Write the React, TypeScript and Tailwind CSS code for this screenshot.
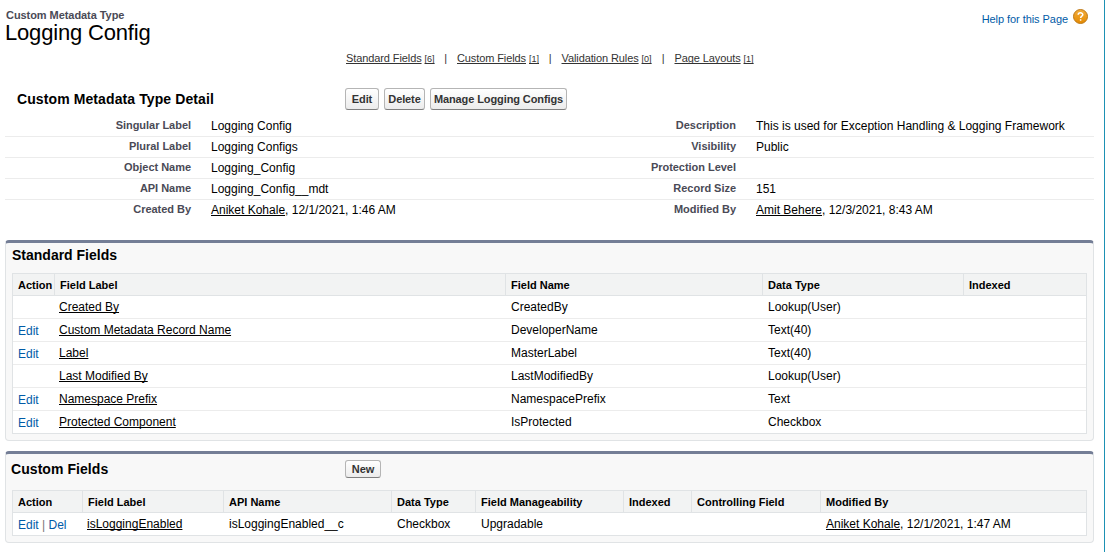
import React from "react";

const links = [
  { label: "Standard Fields", count: "[6]", w: "w-[111px]" },
  { label: "Custom Fields", count: "[1]", w: "w-[104.5px]" },
  { label: "Validation Rules", count: "[0]", w: "w-[113px]" },
  { label: "Page Layouts", count: "[1]", w: "w-[81px]" },
];

type Detail = [string, React.ReactNode, string, React.ReactNode];

const U = ({ children }: { children: React.ReactNode }) => (
  <a href="#" className="underline underline-offset-[1px] decoration-1 [text-decoration-skip-ink:none]">{children}</a>
);

const details: Detail[] = [
  ["Singular Label", "Logging Config", "Description", "This is used for Exception Handling & Logging Framework"],
  ["Plural Label", "Logging Configs", "Visibility", "Public"],
  ["Object Name", "Logging_Config", "Protection Level", ""],
  ["API Name", "Logging_Config__mdt", "Record Size", "151"],
  ["Created By", <><U>Aniket Kohale</U>, 12/1/2021, 1:46 AM</>, "Modified By", <><U>Amit Behere</U>, 12/3/2021, 8:43 AM</>],
];

const standard = [
  [false, "Created By", "CreatedBy", "Lookup(User)"],
  [true, "Custom Metadata Record Name", "DeveloperName", "Text(40)"],
  [true, "Label", "MasterLabel", "Text(40)"],
  [false, "Last Modified By", "LastModifiedBy", "Lookup(User)"],
  [true, "Namespace Prefix", "NamespacePrefix", "Text"],
  [true, "Protected Component", "IsProtected", "Checkbox"],
] as const;

function Button({ children, className }: { children: React.ReactNode; className: string }) {
  return (
    <button
      className={`flex shrink-0 items-center justify-center whitespace-nowrap rounded-[3px] border border-[#b5b5b5] border-b-[#7f7f7f] bg-linear-to-b from-white to-[#ececec] text-[11px] leading-none font-bold tracking-[-0.1px] text-[#333] ${className}`}
    >
      {children}
    </button>
  );
}

function Panel({ title, titleClass, button, className, children }: { title: string; titleClass: string; button?: React.ReactNode; className: string; children: React.ReactNode }) {
  return (
    <section className={`flex w-[1089px] flex-col rounded-[4px] border border-t-[3px] border-[#e0e3e5] border-t-[#747e96] bg-[#f8f8f8] px-[6px] ${className}`}>
      <div className="flex h-[30px] items-start">
        <h2 className={`w-[333px] text-[14px] leading-[18px] font-bold ${titleClass}`}>{title}</h2>
        {button}
      </div>
      {children}
    </section>
  );
}

const headCell = "border-l border-[#e0e3e5] pl-[5px] first:border-l-0";
const stdCols = "grid grid-cols-[41px_451px_257px_201px_1fr]";
const cusCols = "grid grid-cols-[69px_141px_168px_84px_148px_68px_129px_1fr]";

export default function App() {
  return (
    <div className="flex h-[552px] w-[1105px] flex-col overflow-hidden border-r border-[#1d91b4] bg-white pl-[5px] font-['Liberation_Sans',Arial,sans-serif] text-[12px] leading-[14px] whitespace-nowrap text-black">
      <header className="flex h-[51px] justify-between pr-[16px]">
        <div className="pt-[9px] pl-px">
          <div className="text-[11px] leading-[13px] font-bold tracking-[-0.06px] text-[#4a4a56]">Custom Metadata Type</div>
          <h1 className="-ml-px text-[22px] leading-[22px] tracking-[-0.18px]">Logging Config</h1>
        </div>
        <div className="mt-[9px] flex h-[15px] items-start gap-[5px]">
          <a href="#" className="pt-[3px] text-[11px] tracking-[-0.06px] text-[#015ba7]">Help for this Page</a>
          <svg width="15" height="15" viewBox="0 0 15 15">
            <defs>
              <linearGradient id="help" x1="0" y1="0" x2="0" y2="1">
                <stop offset="0" stopColor="#f2ad3d" />
                <stop offset="1" stopColor="#e58a00" />
              </linearGradient>
            </defs>
            <circle cx="7.5" cy="7.5" r="7" fill="url(#help)" stroke="#bd7918" />
            <path d="M5.2 5.8C5.2 3.2 9.8 3.2 9.8 5.7C9.8 7.2 7.6 7.2 7.6 9M7.6 10.2V11.8" fill="none" stroke="#fff" strokeWidth="1.5" />
          </svg>
        </div>
      </header>

      <nav className="flex h-[37px] pl-[341px] text-[11px] leading-[15px] text-[#333]">
        {links.map((l, i) => (
          <div key={l.label} className={`flex justify-between ${l.w}`}>
            <a href="#" className="flex items-baseline gap-[3px]">
              <span className="underline decoration-1 underline-offset-[1px] tracking-[-0.1px] [text-decoration-skip-ink:none]">{l.label}</span>
              <span className="text-[9px] underline decoration-1 underline-offset-[1px] [text-decoration-skip-ink:none]">{l.count}</span>
            </a>
            {i < 3 && <span className="pr-[10px] leading-[15px]">|</span>}
          </div>
        ))}
      </nav>

      <div className="flex h-[27px] items-start">
        <h2 className="w-[340px] pt-[2px] pl-[12px] text-[14px] leading-[18px] font-bold tracking-[0.1px]">Custom Metadata Type Detail</h2>
        <Button className="h-[22px] w-[34px]">Edit</Button>
        <Button className="ml-[5px] h-[22px] w-[41px]">Delete</Button>
        <Button className="ml-[5px] h-[22px] w-[137px]">Manage Logging Configs</Button>
      </div>

      <div className="mb-[20px] w-[1089px]">
        {details.map(([a, b, c, d], i) => (
          <div key={a} className={`grid grid-cols-[186px_359px_186px_1fr] border-b ${i === 4 ? "h-[20px] border-transparent" : i === 0 ? "h-[22px] border-[#ececec]" : "h-[21px] border-[#ececec]"} ${i === 0 ? "pt-[4px]" : "pt-[3px]"}`}>
            <div className="text-right text-[11px] leading-[13px] font-bold tracking-[-0.03px] text-[#4a4a56]">{a}</div>
            <div className="pl-[20px]">{b}</div>
            <div className="text-right text-[11px] leading-[13px] font-bold tracking-[-0.03px] text-[#4a4a56]">{c}</div>
            <div className="pl-[20px]">{d}</div>
          </div>
        ))}
      </div>

      <Panel title="Standard Fields" titleClass="pt-[3px]" className="h-[201px]">
        <div className="w-[1075px] border border-[#e0e3e5] bg-white">
          <div className={`${stdCols} h-[22px] border-b border-[#e0e3e5] bg-[#f2f3f3] text-[11px] leading-[22px] font-bold`}>
            {["Action", "Field Label", "Field Name", "Data Type", "Indexed"].map((h) => (
              <div key={h} className={headCell}>{h}</div>
            ))}
          </div>
          {standard.map(([edit, label, name, type]) => (
            <div key={label} className={`${stdCols} h-[23px] border-b border-[#ececec] pt-[4px] last:h-[22px] last:border-b-0`}>
              <div className="pt-px pl-[5px] text-[#015ba7]">{edit ? "Edit" : ""}</div>
              <div className="pl-[5px]"><U>{label}</U></div>
              <div className="pl-[6px]">{name}</div>
              <div className="pl-[6px]">{type}</div>
            </div>
          ))}
        </div>
      </Panel>

      <Panel
        title="Custom Fields"
        titleClass="-ml-px mr-px pt-[6px] tracking-[0.06px]"
        className="mt-[10px] h-[92px]"
        button={<Button className="mt-[6px] h-[18px] w-[36px]">New</Button>}
      >
        <div className="mt-[6px] w-[1075px] border border-[#e0e3e5] bg-white">
          <div className={`${cusCols} h-[22px] border-b border-[#e0e3e5] bg-[#f2f3f3] text-[11px] leading-[22px] font-bold`}>
            {["Action", "Field Label", "API Name", "Data Type", "Field Manageability", "Indexed", "Controlling Field", "Modified By"].map((h) => (
              <div key={h} className={headCell}>{h}</div>
            ))}
          </div>
          <div className={`${cusCols} h-[22px] pt-[4px]`}>
            <div className="pt-px pl-[5px] text-[#015ba7]">Edit <span className="text-[#777]">|</span> Del</div>
            <div className="pl-[5px]"><U>isLoggingEnabled</U></div>
            <div className="pl-[6px]">isLoggingEnabled__c</div>
            <div className="pl-[6px]">Checkbox</div>
            <div className="pl-[6px]">Upgradable</div>
            <div />
            <div />
            <div className="pl-[6px]"><U>Aniket Kohale</U>, 12/1/2021, 1:47 AM</div>
          </div>
        </div>
      </Panel>
    </div>
  );
}
